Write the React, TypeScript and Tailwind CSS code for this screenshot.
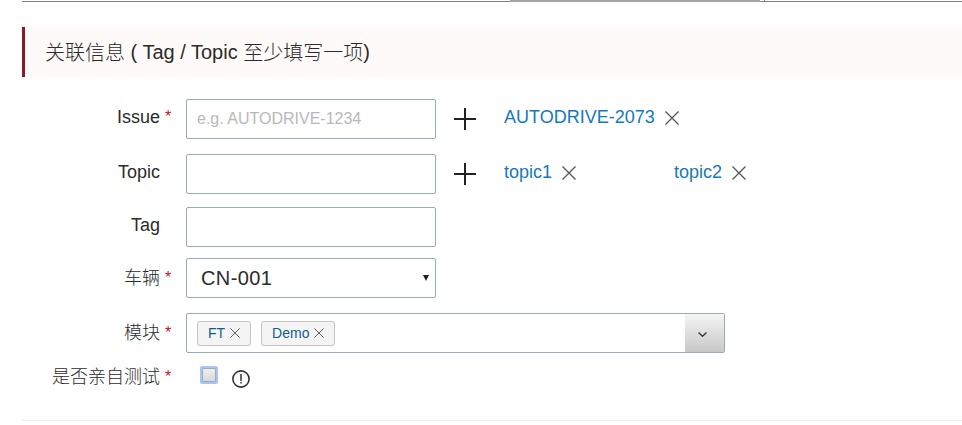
import type { ReactNode } from "react";

const PlusIcon = () => (
  <svg className="ml-[18px] size-[22px] shrink-0" viewBox="0 0 22 22" fill="none" stroke="#222" strokeWidth="2">
    <path d="M0 11H22M11 0V22" />
  </svg>
);

const CloseIcon = ({ className }: { className: string }) => (
  <svg className={className} viewBox="0 0 14 14" fill="none" stroke="#555" strokeWidth="1.3">
    <path d="M0.5 0.5L13.5 13.5M13.5 0.5L0.5 13.5" />
  </svg>
);

const Field = ({
  label,
  required,
  className,
  labelClass = "pb-1",
  children,
}: {
  label: string;
  required?: boolean;
  className: string;
  labelClass?: string;
  children: ReactNode;
}) => (
  <div className={`flex h-10 items-center ${className}`}>
    <div className={`flex w-[164px] shrink-0 text-[18px] leading-6 ${labelClass}`}>
      <span className="w-[138px] text-right">{label}</span>
      {required && <span className="pl-[5px] text-[16px] leading-6 text-[#c4122f]">*</span>}
    </div>
    {children}
  </div>
);

const Entry = ({ text, className = "" }: { text: string; className?: string }) => (
  <div className={`flex items-center ${className}`}>
    <a className="pb-1 text-[18px] leading-6 text-[#1478be]">{text}</a>
    <CloseIcon className="mb-[2px] ml-[10px] size-[14px]" />
  </div>
);

const Chip = ({ text }: { text: string }) => (
  <span className="flex h-[25px] items-center rounded-[3px] border border-[#c3c3c3] bg-[#f4f4f4] px-[10px] text-[14px] text-[#145c8c]">
    {text}
    <CloseIcon className="ml-[5px] size-[10px]" />
  </span>
);

const inputClass =
  "h-10 w-[250px] shrink-0 rounded-[2px] border border-[#9aabb5] px-[10px] text-[16px] outline-none placeholder:text-[#b8b8b8]";

export default function App() {
  return (
    <main className="h-[425px] overflow-hidden bg-white pl-[22px] font-['Liberation_Sans','Noto_Sans_CJK_SC',sans-serif] text-[#2b2b2b]">
      <div className="flex h-[2px] items-end">
        <div className="h-px w-[488px] bg-[#808080]" />
        <div className="h-[2px] w-[250px] bg-[#a6a6a6]" />
        <div className="h-px w-1 bg-[#808080]" />
        <div className="h-[2px] w-px bg-[#808080]" />
        <div className="h-px flex-1 bg-[#808080]" />
      </div>
      <h2 className="mt-[25px] flex h-[50px] items-center border-l-[3px] border-[#841c2c] bg-[#fffafa] pl-5 text-[20px] font-light whitespace-pre">
        <span className="pt-[2px]">关联信息</span>
        <span> ( Tag / Topic </span>
        <span className="pt-[2px]">至少填写一项</span>
        <span>)</span>
      </h2>
      <form className="h-[344px] border-b border-[#ebebeb] pt-[22px] font-light">
        <Field label="Issue" required className="">
          <input className={inputClass} placeholder="e.g. AUTODRIVE-1234" />
          <PlusIcon />
          <Entry text="AUTODRIVE-2073" className="ml-7" />
        </Field>
        <Field label="Topic" className="mt-[15px]">
          <input className={inputClass} />
          <PlusIcon />
          <Entry text="topic1" className="ml-7 w-[170px]" />
          <Entry text="topic2" />
        </Field>
        <Field label="Tag" className="mt-[13px]">
          <input className={inputClass} />
        </Field>
        <Field label="车辆" required className="mt-[11px]" labelClass="pt-0">
          <div className="flex h-10 w-[250px] items-center justify-between rounded-[2px] border border-[#9aabb5] pr-[6px] pl-[14px] text-[20px]">
            <span className="tracking-[0.4px]">CN-001</span>
            <svg className="h-[6px] w-[6px]" viewBox="0 0 6 6" fill="#222">
              <path d="M0 0H6L3 6Z" />
            </svg>
          </div>
        </Field>
        <Field label="模块" required className="mt-[15px]" labelClass="pt-0">
          <div className="flex h-10 w-[539px] items-center gap-[10px] rounded-[2px] border border-[#9aabb5] pl-[10px]">
            <Chip text="FT" />
            <Chip text="Demo" />
            <div className="ml-auto flex h-[38px] w-[39px] items-center justify-center bg-linear-to-b from-[#f5f5f5] to-[#c8c8c8] pr-[5px]">
              <svg className="mt-[2px] h-[5px] w-[9px]" viewBox="0 0 9 5" fill="none" stroke="#333" strokeWidth="1.3">
                <path d="M0.5 0.5L4.5 4.3L8.5 0.5" />
              </svg>
            </div>
          </div>
        </Field>
        <Field label="是否亲自测试" required className="mt-[5px]" labelClass="pb-[2px]">
          <span className="mb-[7px] ml-[14px] flex size-[18px] rounded-[2px] bg-[#a5c5fb] p-[2px]">
            <span className="flex-1 rounded-[1px] border border-[#a6a9b0] bg-linear-to-b from-[#eeeeee] to-[#dadada]" />
          </span>
          <svg className="mt-[1px] ml-[14px] size-[18px]" viewBox="0 0 18 18" fill="none" stroke="#333" strokeWidth="1.6">
            <circle cx="9" cy="9" r="8.1" />
            <path d="M9 4V11M9 12V13.5" stroke="#555" strokeWidth="1.8" />
          </svg>
        </Field>
      </form>
    </main>
  );
}
